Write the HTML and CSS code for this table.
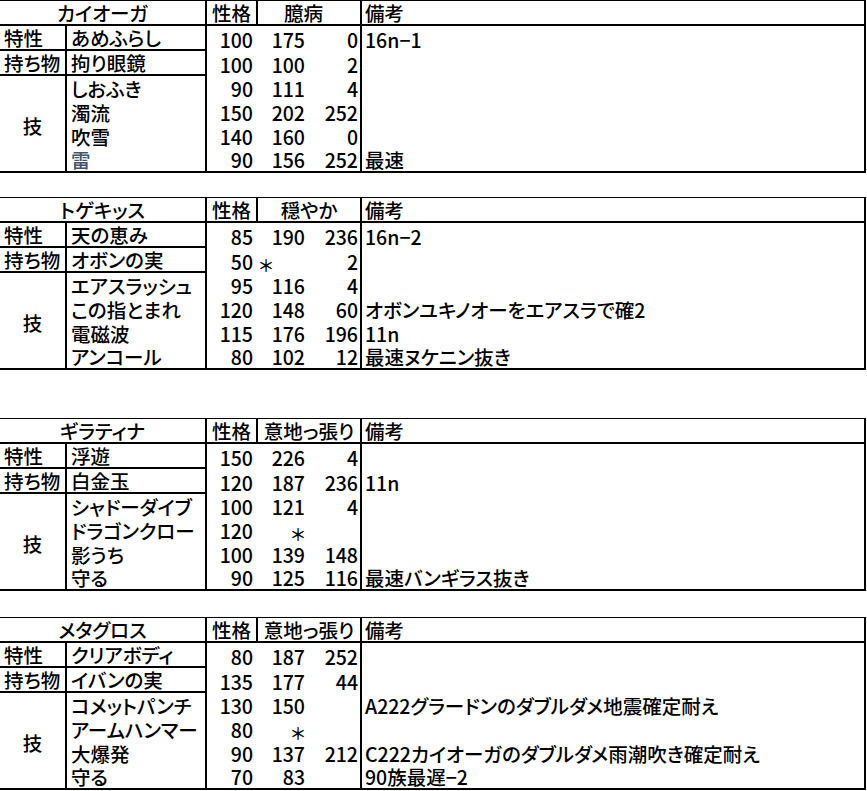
FILE: index.html
```html
<!DOCTYPE html>
<html lang="ja">
<head>
<meta charset="utf-8">
<title>パーティ</title>
<link rel="stylesheet" href="styles.css">
</head>
<body>
<div class="sheet">

  <section class="block b1">
    <div class="c hname">カイオーガ</div>
    <div class="c hnat">性格</div>
    <div class="c hmood shift">臆病</div>
    <div class="c hnote">備考</div>

    <div class="c lab sep">特性</div>
    <div class="c nm sep">あめふらし</div>
    <div class="c n1">100</div><div class="c n2">175</div><div class="c n3">0</div>
    <div class="c note">16n−1</div>

    <div class="c lab sep">持ち物</div>
    <div class="c nm sep">拘り眼鏡</div>
    <div class="c n1">100</div><div class="c n2">100</div><div class="c n3">2</div>
    <div class="c note"></div>

    <div class="c waza">技</div>
    <div class="c nm">しおふき</div>
    <div class="c n1">90</div><div class="c n2">111</div><div class="c n3">4</div>
    <div class="c note"></div>

    <div class="c nm">濁流</div>
    <div class="c n1">150</div><div class="c n2">202</div><div class="c n3">252</div>
    <div class="c note"></div>

    <div class="c nm">吹雪</div>
    <div class="c n1">140</div><div class="c n2">160</div><div class="c n3">0</div>
    <div class="c note"></div>

    <div class="c nm muted">雷</div>
    <div class="c n1">90</div><div class="c n2">156</div><div class="c n3">252</div>
    <div class="c note">最速</div>
  </section>

  <section class="block b2">
    <div class="c hname">トゲキッス</div>
    <div class="c hnat">性格</div>
    <div class="c hmood">穏やか</div>
    <div class="c hnote">備考</div>

    <div class="c lab sep">特性</div>
    <div class="c nm sep">天の恵み</div>
    <div class="c n1">85</div><div class="c n2">190</div><div class="c n3">236</div>
    <div class="c note">16n−2</div>

    <div class="c lab sep">持ち物</div>
    <div class="c nm sep">オボンの実</div>
    <div class="c n1">50</div><div class="c n2 left"><span class="ast">＊</span></div><div class="c n3">2</div>
    <div class="c note"></div>

    <div class="c waza">技</div>
    <div class="c nm">エアスラッシュ</div>
    <div class="c n1">95</div><div class="c n2">116</div><div class="c n3">4</div>
    <div class="c note"></div>

    <div class="c nm">この指とまれ</div>
    <div class="c n1">120</div><div class="c n2">148</div><div class="c n3">60</div>
    <div class="c note">オボンユキノオーをエアスラで確2</div>

    <div class="c nm">電磁波</div>
    <div class="c n1">115</div><div class="c n2">176</div><div class="c n3">196</div>
    <div class="c note">11n</div>

    <div class="c nm">アンコール</div>
    <div class="c n1">80</div><div class="c n2">102</div><div class="c n3">12</div>
    <div class="c note">最速ヌケニン抜き</div>
  </section>

  <section class="block b3">
    <div class="c hname">ギラティナ</div>
    <div class="c hnat">性格</div>
    <div class="c hmood">意地っ張り</div>
    <div class="c hnote">備考</div>

    <div class="c lab sep">特性</div>
    <div class="c nm sep">浮遊</div>
    <div class="c n1">150</div><div class="c n2">226</div><div class="c n3">4</div>
    <div class="c note"></div>

    <div class="c lab sep">持ち物</div>
    <div class="c nm sep">白金玉</div>
    <div class="c n1">120</div><div class="c n2">187</div><div class="c n3">236</div>
    <div class="c note">11n</div>

    <div class="c waza">技</div>
    <div class="c nm">シャドーダイブ</div>
    <div class="c n1">100</div><div class="c n2">121</div><div class="c n3">4</div>
    <div class="c note"></div>

    <div class="c nm">ドラゴンクロー</div>
    <div class="c n1">120</div><div class="c n2"><span class="ast">＊</span></div><div class="c n3"></div>
    <div class="c note"></div>

    <div class="c nm">影うち</div>
    <div class="c n1">100</div><div class="c n2">139</div><div class="c n3">148</div>
    <div class="c note"></div>

    <div class="c nm">守る</div>
    <div class="c n1">90</div><div class="c n2">125</div><div class="c n3">116</div>
    <div class="c note">最速バンギラス抜き</div>
  </section>

  <section class="block b4">
    <div class="c hname">メタグロス</div>
    <div class="c hnat">性格</div>
    <div class="c hmood">意地っ張り</div>
    <div class="c hnote">備考</div>

    <div class="c lab sep">特性</div>
    <div class="c nm sep">クリアボディ</div>
    <div class="c n1">80</div><div class="c n2">187</div><div class="c n3">252</div>
    <div class="c note"></div>

    <div class="c lab sep">持ち物</div>
    <div class="c nm sep">イバンの実</div>
    <div class="c n1">135</div><div class="c n2">177</div><div class="c n3">44</div>
    <div class="c note"></div>

    <div class="c waza">技</div>
    <div class="c nm">コメットパンチ</div>
    <div class="c n1">130</div><div class="c n2">150</div><div class="c n3"></div>
    <div class="c note">A222グラードンのダブルダメ地震確定耐え</div>

    <div class="c nm">アームハンマー</div>
    <div class="c n1">80</div><div class="c n2"><span class="ast">＊</span></div><div class="c n3"></div>
    <div class="c note"></div>

    <div class="c nm">大爆発</div>
    <div class="c n1">90</div><div class="c n2">137</div><div class="c n3">212</div>
    <div class="c note">C222カイオーガのダブルダメ雨潮吹き確定耐え</div>

    <div class="c nm">守る</div>
    <div class="c n1">70</div><div class="c n2">83</div><div class="c n3"></div>
    <div class="c note">90族最遅−2</div>
  </section>

</div>
</body>
</html>
```

FILE: styles.css
```css
html, body {
  margin: 0;
  padding: 0;
  background: #ffffff;
}

body {
  font-family: "Noto Sans CJK JP", "Liberation Sans", sans-serif;
  font-size: 19.5px;
  font-weight: 500;
  color: #000000;
  font-feature-settings: "palt" 1;
}

.sheet {
  width: 866px;
  display: flex;
  flex-direction: column;
}

.block {
  display: grid;
  grid-template-columns: 67px 140px 49px 52px 54px 502px;
  grid-template-rows: 25px 25px 25px 24px 24px 24px 23px;
  border-top: 1px solid #000;
  border-right: 2px solid #000;
  border-bottom: 2px solid #000;
}

.b2 { margin-top: 24px; }
.b3 { margin-top: 48px; }
.b4 { margin-top: 26px; }

.c {
  box-sizing: border-box;
  display: flex;
  align-items: flex-end;
  padding: 0 3px 2px 3px;
  line-height: 19px;
  white-space: nowrap;
  min-width: 0;
}

/* header row */
.hname {
  grid-column: span 2;
  justify-content: center;
  border-right: 2px solid #000;
  border-bottom: 2px solid #000;
}
.hnat {
  justify-content: center;
  border-bottom: 2px solid #000;
}
.hmood {
  grid-column: span 2;
  justify-content: center;
  border-left: 2px solid #000;
  border-right: 2px solid #000;
  border-bottom: 2px solid #000;
}
.shift {
  padding-right: 14px;
}
.hnote {
  border-bottom: 2px solid #000;
}

/* label column */
.lab {
  padding-left: 4px;
  border-right: 2px solid #000;
}
.sep {
  border-bottom: 2px solid #000;
}
.waza {
  grid-row: span 4;
  align-items: center;
  justify-content: center;
  padding: 4px 0 0 0;
  border-right: 2px solid #000;
}

/* name column */
.nm {
  padding-left: 4px;
  border-right: 2px solid #000;
}
.muted {
  color: #44546a;
}

/* number columns */
.n1, .n2, .n3 {
  justify-content: flex-end;
}
.n3 {
  padding-right: 2px;
  border-right: 2px solid #000;
}
.left {
  justify-content: flex-start;
}
.ast {
  font-size: 17px;
  line-height: 19px;
  margin-bottom: -3px;
}

.note {
  padding-left: 3px;
}
```
